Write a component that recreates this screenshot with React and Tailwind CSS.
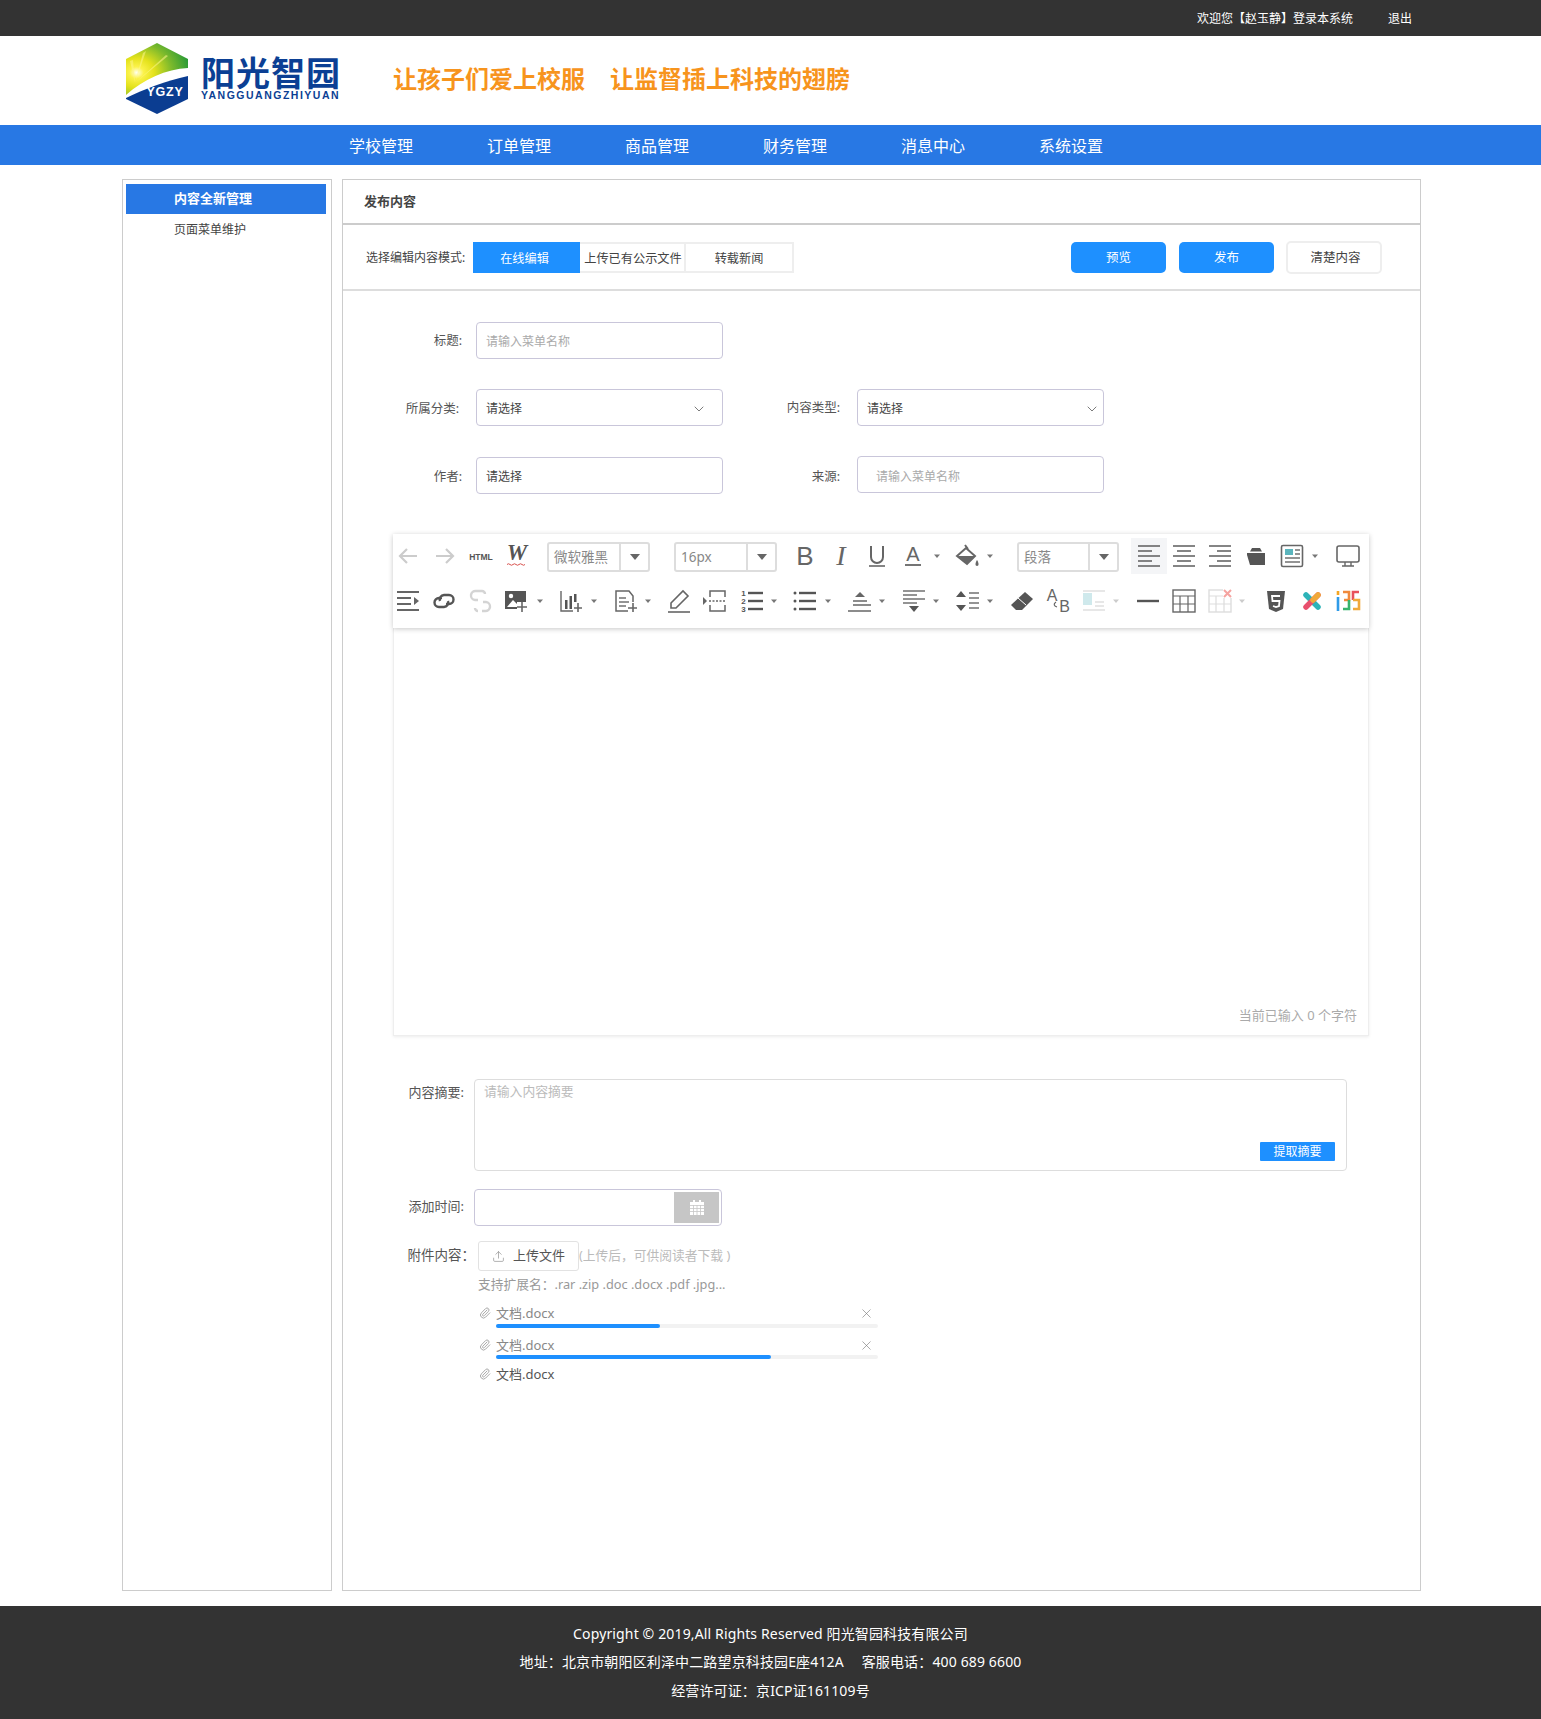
import { ChevronDown, Upload, Paperclip, X } from 'lucide-react';

const Svg = ({ children }) => (
  <svg width="24" height="24" viewBox="0 0 24 24" fill="none" className="block shrink-0 overflow-visible">
    {children}
  </svg>
);

const lines = (rows, color = '#666', w = 1.6) =>
  rows.map(([x1, x2, y], i) => <line key={i} x1={x1} x2={x2} y1={y} y2={y} stroke={color} strokeWidth={w} />);

const icons = {
  back: <Svg><path d="M21 12H4M11 5l-7 7 7 7" stroke="#ccc" strokeWidth="2.2" /></Svg>,
  forward: <Svg><path d="M3 12h17M13 5l7 7-7 7" stroke="#ccc" strokeWidth="2.2" /></Svg>,
  html: <Svg><text x="12" y="15.5" textAnchor="middle" fontSize="8.5" fontWeight="700" fill="#555" fontFamily="Liberation Sans">HTML</text></Svg>,
  word: (
    <Svg>
      <text x="12" y="16" textAnchor="middle" fontSize="23" fontWeight="700" fontStyle="italic" fill="#555" fontFamily="Liberation Serif">W</text>
      <path d="M2 20.500q1.500-1.500 3 0t3 0 3 0 3 0 3 0 3 0" stroke="#d9534f" strokeWidth="1" />
    </Svg>
  ),
  bold: <Svg><text x="12" y="21" textAnchor="middle" fontSize="26" fill="#666" fontFamily="Liberation Sans">B</text></Svg>,
  italic: <Svg><text x="12" y="21" textAnchor="middle" fontSize="28" fontStyle="italic" fill="#666" fontFamily="Liberation Serif">I</text></Svg>,
  underline: <Svg><path d="M6 2v11a6 6 0 0 0 12 0V2" stroke="#666" strokeWidth="2" /><path d="M4 22h16" stroke="#666" strokeWidth="1.6" /></Svg>,
  color: <Svg><text x="12" y="17" textAnchor="middle" fontSize="20" fill="#666" fontFamily="Liberation Sans">A</text><path d="M4 21h16" stroke="#666" strokeWidth="1.8" /></Svg>,
  bucket: (
    <Svg>
      <path d="M9 1l3 4M1 12l9-8 9 8-8 8z" stroke="#666" strokeWidth="2" />
      <path d="M2 12h17l-8 8z" fill="#666" />
      <path d="M21 16c2 3 2 6 0 6s-2-3 0-6z" fill="#666" />
    </Svg>
  ),
  alignLeft: <Svg>{lines([[1, 23, 2], [1, 15, 7], [1, 23, 12], [1, 15, 17], [1, 23, 22]])}</Svg>,
  alignCenter: <Svg>{lines([[1, 23, 2], [5, 19, 7], [1, 23, 12], [5, 19, 17], [1, 23, 22]])}</Svg>,
  alignRight: <Svg>{lines([[1, 23, 2], [9, 23, 7], [1, 23, 12], [9, 23, 17], [1, 23, 22]])}</Svg>,
  clip: <Svg><path d="M3 9h18v12H3z" fill="#555" /><path d="M8 4h8l2 3.500H6z" fill="#555" /><path d="M3 11l3 10H3z" fill="#fff" /></Svg>,
  news: (
    <Svg>
      <rect x="1.5" y="1.5" width="21" height="21" rx="1.5" stroke="#666" strokeWidth="1.6" />
      <rect x="5" y="5" width="8" height="6" fill="#5bb5bd" />
      {lines([[15, 20, 6], [15, 20, 10], [5, 20, 14], [5, 20, 18]], '#666', 1.4)}
    </Svg>
  ),
  monitor: (
    <Svg>
      <rect x="1" y="2" width="22" height="16" rx="2" stroke="#666" strokeWidth="1.6" />
      <path d="M9 18v4M15 18v4M6 22h12" stroke="#666" strokeWidth="1.4" />
    </Svg>
  ),
  indent: <Svg>{lines([[1, 23, 3], [1, 15, 9], [1, 15, 15], [1, 23, 21]], '#666', 2)}<path d="M18 8l5 4-5 4z" fill="#666" /></Svg>,
  link: <Svg><path d="M10 9H7a4.500 4.500 0 0 0 0 9h5a4.500 4.500 0 0 0 4-6M14 15h3a4.500 4.500 0 0 0 0-9h-5a4.500 4.500 0 0 0-4 6" stroke="#555" strokeWidth="2.4" /></Svg>,
  unlink: <Svg><path d="M14 2H8a4.500 4.500 0 0 0-1 9h3M14 22h3a4.500 4.500 0 0 0 1-9h-3M14 2a3 3 0 0 1 3 3M10 22a3 3 0 0 1-3-3" stroke="#d4d4d4" strokeWidth="2.4" /></Svg>,
  image: (
    <Svg>
      <rect x="1" y="2" width="21" height="18" fill="#555" />
      <circle cx="7" cy="7" r="2.200" fill="#fff" />
      <path d="M3 18l6-7 4 4 3-2v5z" fill="#fff" />
      <path d="M13 13h10v10H13z" fill="#fff" />
      <path d="M18 13v10M13 18h10" stroke="#666" strokeWidth="1.6" />
    </Svg>
  ),
  chart: (
    <Svg>
      <path d="M2 2v20h12" stroke="#666" strokeWidth="1.4" />
      <path d="M6 11h2.500v9H6zM10.500 7H13v13h-2.500zM15 5h2.500v8H15z" fill="#555" />
      <path d="M19 14v9M15 19h8" stroke="#666" strokeWidth="1.6" />
    </Svg>
  ),
  file: (
    <Svg>
      <path d="M14 22H2V2h13l4 5v6" stroke="#666" strokeWidth="1.5" />
      {lines([[5, 12, 9], [5, 15, 13], [5, 12, 17]], '#666', 1.4)}
      <path d="M19 14v9M14 19h9" stroke="#666" strokeWidth="1.6" />
    </Svg>
  ),
  pen: <Svg><path d="M4 14L16 2l5 5L9 19H4z" stroke="#666" strokeWidth="1.6" /><path d="M1 23h22" stroke="#666" strokeWidth="1.6" /></Svg>,
  pagebreak: (
    <Svg>
      <path d="M7 8V2h15v6M7 16v6h15v-6" stroke="#666" strokeWidth="1.5" />
      <path d="M6 12h17" stroke="#666" strokeWidth="1.4" strokeDasharray="2 1.500" />
      <path d="M0 8l4 4-4 4z" fill="#666" />
    </Svg>
  ),
  ol: (
    <Svg>
      {lines([[8, 23, 4], [8, 23, 12], [8, 23, 20]], '#555', 2.4)}
      <text x="3.500" y="7" textAnchor="middle" fontSize="8" fontWeight="700" fill="#555" fontFamily="Liberation Sans">1</text>
      <text x="3.500" y="15" textAnchor="middle" fontSize="8" fontWeight="700" fill="#555" fontFamily="Liberation Sans">2</text>
      <text x="3.500" y="23" textAnchor="middle" fontSize="8" fontWeight="700" fill="#555" fontFamily="Liberation Sans">3</text>
    </Svg>
  ),
  ul: (
    <Svg>
      {lines([[6, 23, 4], [6, 23, 12], [6, 23, 20]], '#555', 2.4)}
      <circle cx="2" cy="4" r="1.500" fill="#555" />
      <circle cx="2" cy="12" r="1.500" fill="#555" />
      <circle cx="2" cy="20" r="1.500" fill="#555" />
    </Svg>
  ),
  align: <Svg><path d="M12 3l5 5H7z" fill="#666" />{lines([[5, 19, 12], [5, 23, 16], [0, 23, 22]], '#666', 1.5)}</Svg>,
  valign: <Svg>{lines([[1, 23, 2], [1, 15, 6], [1, 23, 10], [1, 15, 14]], '#666', 1.4)}<path d="M7 17h10l-5 6z" fill="#555" /></Svg>,
  lineHeight: (
    <Svg>
      <path d="M5 2l5 6H0zM5 22l5-6H0z" fill="#555" />
      {lines([[13, 23, 4], [13, 23, 9], [13, 23, 14], [13, 23, 19]], '#666', 1.4)}
    </Svg>
  ),
  eraser: <Svg><path d="M15 3l8 7-11 11H6l-5-5z" fill="#555" /><path d="M8 9l8 7" stroke="#fff" strokeWidth="1" /></Svg>,
  ab: (
    <Svg>
      <text x="6" y="12" textAnchor="middle" fontSize="16" fill="#666" fontFamily="Liberation Sans">A</text>
      <text x="18.500" y="23" textAnchor="middle" fontSize="16" fill="#666" fontFamily="Liberation Sans">B</text>
      <path d="M10 13c-3 2-2 4 1 5" stroke="#666" strokeWidth="1.2" />
    </Svg>
  ),
  imageTable: <Svg><rect x="1" y="4" width="9" height="12" fill="#cfe9ec" />{lines([[1, 23, 2], [13, 22, 13], [13, 22, 17], [1, 23, 21]], '#ddd', 1.4)}</Svg>,
  hr: <Svg><path d="M1 12h22" stroke="#555" strokeWidth="2.4" /></Svg>,
  table: (
    <Svg>
      <rect x="1" y="1" width="22" height="22" stroke="#666" strokeWidth="1.4" />
      <path d="M1 7h22M1 15h22M8 7v16M16 7v16" stroke="#666" strokeWidth="1.2" />
    </Svg>
  ),
  tableDel: (
    <Svg>
      <rect x="1" y="1" width="22" height="22" stroke="#ddd" strokeWidth="1.4" />
      <path d="M1 7h22M1 15h22M8 7v16M16 7v16" stroke="#ddd" strokeWidth="1.2" />
      <rect x="15" y="0" width="9" height="9" fill="#fff" />
      <path d="M16 1l7 7M23 1l-7 7" stroke="#f5a3a0" strokeWidth="2" />
    </Svg>
  ),
  html5: <Svg><path d="M3 2h18l-2 18-7 3-7-3z" fill="#555" /><path d="M16 7H8l.5 5h7l-.5 5-3 1-3-1" stroke="#fff" strokeWidth="1.8" /></Svg>,
  xmind: (
    <Svg>
      <path d="M6 6l12 12" stroke="#2db3b8" strokeWidth="5.500" strokeLinecap="round" />
      <path d="M18 6L6 18" stroke="#e8506e" strokeWidth="5.500" strokeLinecap="round" />
      <path d="M18 6l-5 5" stroke="#f0a93a" strokeWidth="5.500" strokeLinecap="round" />
    </Svg>
  ),
  nums: (
    <Svg>
      <path d="M2 2v4" stroke="#f5a623" strokeWidth="2.600" />
      <path d="M2 8v14" stroke="#2f9be8" strokeWidth="2.600" />
      <path d="M7 3h6v8H8" stroke="#f08a3c" strokeWidth="2.600" />
      <path d="M13 11v9H7" stroke="#37b36b" strokeWidth="2.600" />
      <path d="M23 3h-6v8" stroke="#e8505b" strokeWidth="2.600" />
      <path d="M17 11h6v9h-6" stroke="#f0a93a" strokeWidth="2.600" />
    </Svg>
  ),
};

const Caret = ({ light }) => (
  <svg width="8" height="24" viewBox="0 0 8 24" className="block shrink-0">
    <path d="M1 10.500h6l-3 3.500z" fill={light ? '#ccc' : '#777'} />
  </svg>
);

const ToolSelect = ({ label, className }) => (
  <div className={`flex h-[30px] shrink-0 rounded-[3px] border-2 border-[#ddd] text-[13.500px] leading-[26px] text-[#888] ${className}`}>
    <span className="flex-1 pl-[5px]">{label}</span>
    <span className="flex w-[29px] items-center justify-center border-l-2 border-[#ddd]">
      <span className="h-0 w-0 border-x-[5px] border-t-[6px] border-x-transparent border-t-[#666]" />
    </span>
  </div>
);

const row1 = [
  ['back', 'ml-[3px]'], ['forward', 'ml-[13px]'], ['html', 'ml-[12px]'], ['word', 'ml-[12px]'],
];
const row1b = [
  ['bold', 'ml-[16px]'], ['italic', 'ml-[12px]'], ['underline', 'ml-[12px]'], ['color', 'ml-[12px]'],
  ['caret', 'ml-[8px]'], ['bucket', 'ml-[15px]'], ['caret', 'ml-[6px]'],
];
const row1c = [
  ['alignCenter', 'ml-[5px]'], ['alignRight', 'ml-[12px]'], ['clip', 'ml-[12px]'], ['news', 'ml-[12px]'],
  ['caret', 'ml-[7px]'], ['monitor', 'ml-[17px]'],
];
const row2 = [
  ['indent', 'ml-[3px]'], ['link', 'ml-[12px]'], ['unlink', 'ml-[12px]'], ['image', 'ml-[12px]'], ['caret', 'ml-[8px]'],
  ['chart', 'ml-[15px]'], ['caret', 'ml-[7px]'], ['file', 'ml-[16px]'], ['caret', 'ml-[6px]'], ['pen', 'ml-[15px]'],
  ['pagebreak', 'ml-[12px]'], ['ol', 'ml-[13px]'], ['caret', 'ml-[6px]'], ['ul', 'ml-[15px]'], ['caret', 'ml-[7px]'],
  ['align', 'ml-[16px]'], ['caret', 'ml-[6px]'], ['valign', 'ml-[16px]'], ['caret', 'ml-[6px]'], ['lineHeight', 'ml-[16px]'],
  ['caret', 'ml-[6px]'], ['eraser', 'ml-[16px]'], ['ab', 'ml-[12px]'], ['imageTable', 'ml-[12px]'], ['caretLight', 'ml-[6px]'],
  ['hr', 'ml-[16px]'], ['table', 'ml-[12px]'], ['tableDel', 'ml-[12px]'], ['caretLight', 'ml-[6px]'], ['html5', 'ml-[18px]'],
  ['xmind', 'ml-[12px]'], ['nums', 'ml-[12px]'],
];

const Tools = ({ items }) =>
  items.map(([name, ml], i) => (
    <span key={i} className={`block shrink-0 ${ml}`}>
      {name === 'caret' ? <Caret /> : name === 'caretLight' ? <Caret light /> : icons[name]}
    </span>
  ));

const Logo = () => (
  <svg width="66" height="74" viewBox="0 0 66 74" className="block shrink-0">
    <defs>
      <radialGradient id="sun" cx="0.17" cy="0.57" r="0.95">
        <stop offset="0" stopColor="#fffff0" />
        <stop offset="0.12" stopColor="#fbf24a" />
        <stop offset="0.3" stopColor="#e4e21c" />
        <stop offset="0.6" stopColor="#7dba2c" />
        <stop offset="1" stopColor="#0f9038" />
      </radialGradient>
    </defs>
    <path d="M33 2l31 16v9C42 28 20 38 2 54V18z" fill="url(#sun)" />
    <path d="M11 42L6 20l3-1zM11 42L19 12l3-2zM11 42L42 14l2 1z" fill="#fdf68a" opacity="0.55" />
    <path d="M64 35v23L33 73 2 58v-1C20 48 42 40 64 35z" fill="#0b3d91" />
    <text x="41" y="55" textAnchor="middle" fontSize="12.500" fontWeight="700" letterSpacing="0.8" fill="#fff" fontFamily="Liberation Sans">YGZY</text>
  </svg>
);

const CalendarIcon = () => (
  <svg width="14" height="15" viewBox="0 0 14 15" className="block">
    <path d="M0 2h14v13H0z" fill="#fff" />
    <path d="M3 0h2v3H3zM9 0h2v3H9z" fill="#fff" />
    <path d="M0 5.500h14M0 8.500h14M0 11.500h14M3.500 5v10M7 5v10M10.500 5v10" stroke="#c6c6c6" strokeWidth="0.8" />
  </svg>
);

const inputBox = 'flex h-[37px] shrink-0 items-center rounded-[4px] border border-[#c9c6da] bg-white text-[12px]';
const Label = ({ className, children }) => (
  <span className={`shrink-0 text-right text-[12.500px] whitespace-nowrap text-[#555] ${className}`}>{children}</span>
);

const FileRow = ({ done, pct, className, barClass }) => (
  <div className={`flex w-[400px] ${className}`}>
    <Paperclip size={12} className="mt-[2px] ml-[1px] w-[17px] shrink-0 pr-[5px] text-[#aaa]" />
    <div className="flex-1">
      <div className="flex items-center justify-between leading-[17px]">
        <span className={`text-[13px] ${done ? 'text-[#555]' : 'text-[#888]'}`}>文档.docx</span>
        {!done && <X size={15} strokeWidth={1} className="mr-[4px] text-[#777]" />}
      </div>
      {!done && (
        <div className={`h-[4px] w-[382px] rounded-full bg-[#f2f2f2] ${barClass}`}>
          <div className="h-full rounded-full bg-[#1e90ff]" style={{ width: `${pct}%` }} />
        </div>
      )}
    </div>
  </div>
);

const App = () => {
  return (
    <div className="min-h-[1719px] w-[1541px] bg-white font-['Noto_Sans','Noto_Sans_CJK_SC',sans-serif] text-[12px] text-[#333]">
      {/* top bar */}
      <div className="flex h-9 items-center justify-end bg-[#333] pt-[2px] pr-[129px] text-[12px] text-white">
        <span>欢迎您【赵玉静】登录本系统</span>
        <span className="ml-[35px]">退出</span>
      </div>

      {/* logo */}
      <div className="flex h-[89px] items-center pl-[124px]">
        <div className="mb-[5px]">
          <Logo />
        </div>
        <div className="mb-[3px] ml-[11px] w-[141px]">
          <div className="text-[34px] leading-[32px] font-bold tracking-[1px] whitespace-nowrap text-[#0b3f94]">阳光智园</div>
          <div className="mt-[1px] font-['Liberation_Sans',sans-serif] text-[10.500px] leading-[11px] font-bold tracking-[1.500px] whitespace-nowrap text-[#0b3f94]">YANGGUANGZHIYUAN</div>
        </div>
        <div className="mb-[4px] ml-[51px] text-[24px] font-bold whitespace-nowrap text-[#f7941d]">让孩子们爱上校服</div>
        <div className="mb-[4px] ml-[25px] text-[24px] font-bold whitespace-nowrap text-[#f7941d]">让监督插上科技的翅膀</div>
      </div>

      {/* nav */}
      <div className="flex h-10 items-center gap-[74px] bg-[#2878e4] pt-[2px] pl-[349px] text-[16px] text-white">
        {['学校管理', '订单管理', '商品管理', '财务管理', '消息中心', '系统设置'].map((item) => (
          <span key={item}>{item}</span>
        ))}
      </div>

      {/* body */}
      <div className="mt-[14px] flex h-[1412px] pl-[122px]">
        <div className="w-[210px] shrink-0 border border-[#ccc] pt-[4px] pr-[5px] pl-[3px]">
          <div className="h-[30px] bg-[#2878e4] pl-[48px] text-[13px] leading-[29px] font-bold text-white">内容全新管理</div>
          <div className="pl-[48px] text-[12px] leading-[31px] text-[#444]">页面菜单维护</div>
        </div>

        <div className="ml-[10px] w-[1079px] shrink-0 border border-[#ccc]">
          <div className="h-[45px] border-b-2 border-[#ccc] pl-[21px] text-[13px] leading-[43px] font-bold text-[#444]">发布内容</div>

          {/* mode + actions */}
          <div className="flex h-[66px] items-center border-b-2 border-[#ddd] pl-[23px]">
            <span className="w-[107px] shrink-0 pt-[1px] text-[12px] whitespace-nowrap text-[#444]">选择编辑内容模式:</span>
            <div className="flex h-[31px] shrink-0 text-[12.200px]">
              <span className="flex w-[107px] items-center justify-center bg-[#1e90ff] pt-[4px] pr-[4px] text-white">在线编辑</span>
              <span className="flex w-[106px] items-center justify-center border-y-2 border-r-2 border-[#eee] pt-[5px] pl-[2px] whitespace-nowrap text-[#444]">上传已有公示文件</span>
              <span className="flex w-[108px] items-center justify-center border-y-2 border-r-2 border-[#eee] pt-[4px] text-[#444]">转载新闻</span>
            </div>
            <div className="ml-[277px] flex h-[33px] items-center text-[12.500px]">
              <span className="flex h-[31px] w-[95px] items-center justify-center rounded-[5px] bg-[#1e90ff] pt-[3px] text-white">预览</span>
              <span className="ml-[13px] flex h-[31px] w-[95px] items-center justify-center rounded-[5px] bg-[#1e90ff] pt-[3px] text-white">发布</span>
              <span className="ml-[12px] flex h-[33px] w-[96px] items-center justify-center rounded-[5px] border-2 border-[#eee] pt-[3px] pl-[3px] text-[#444]">清楚内容</span>
            </div>
          </div>

          <div className="pt-[31px]">
            <div className="flex items-center">
              <Label className="w-[119px] pt-[2px]">标题:</Label>
              <div className={`ml-[14px] w-[247px] pt-[2px] pl-[9px] text-[#aaa] ${inputBox}`}>请输入菜单名称</div>
            </div>
            <div className="mt-[30px] flex items-center">
              <Label className="w-[116px] pt-[4px]">所属分类:</Label>
              <div className={`ml-[17px] w-[247px] justify-between pt-[2px] pr-[15px] pl-[9px] text-[#444] ${inputBox}`}>
                请选择
                <ChevronDown size={16} strokeWidth={1.300} className="text-[#666]" />
              </div>
              <Label className="ml-[55px] w-[62px] pt-[2px]">内容类型:</Label>
              <div className={`ml-[17px] w-[247px] justify-between pt-[2px] pr-[3px] pl-[9px] text-[#444] ${inputBox}`}>
                请选择
                <ChevronDown size={16} strokeWidth={1.300} className="text-[#666]" />
              </div>
            </div>
            <div className="mt-[31px] flex items-center">
              <Label className="w-[119px] pt-[4px]">作者:</Label>
              <div className={`ml-[14px] w-[247px] pt-[2px] pl-[9px] text-[#444] ${inputBox}`}>请选择</div>
              <Label className="ml-[83px] w-[34px] pt-[3px]">来源:</Label>
              <div className={`ml-[17px] w-[247px] -translate-y-px pt-[4px] pl-[18px] text-[#aaa] ${inputBox}`}>请输入菜单名称</div>
            </div>

            {/* editor */}
            <div className="mt-[40px] ml-[50px] w-[976px]">
              <div className="relative z-10 h-[94px] bg-white shadow-[0_1px_5px_rgba(0,0,0,0.22)]">
                <div className="flex h-[44px] items-center">
                  <Tools items={row1} />
                  <ToolSelect label="微软雅黑" className="ml-[18px] w-[103px] translate-y-px" />
                  <ToolSelect label="16px" className="ml-[24px] w-[103px] translate-y-px" />
                  <Tools items={row1b} />
                  <ToolSelect label="段落" className="ml-[23px] w-[102px] translate-y-px" />
                  <span className="ml-[12px] flex h-[36px] w-[36px] shrink-0 items-center justify-center bg-[#f4f5f7]">{icons.alignLeft}</span>
                  <Tools items={row1c} />
                </div>
                <div className="mt-[11px] flex h-[24px] items-center">
                  <Tools items={row2} />
                </div>
              </div>
              <div className="relative h-[408px] border-x border-b border-[#eee] shadow-[0_1px_3px_rgba(0,0,0,0.08)]">
                <span className="absolute right-[11px] bottom-[10px] text-[13px] text-[#aaa]">当前已输入 0 个字符</span>
              </div>
            </div>

            {/* summary */}
            <div className="mt-[43px] flex">
              <Label className="mt-[4px] w-[121px] text-[13px]">内容摘要:</Label>
              <div className="relative ml-[10px] h-[92px] w-[873px] rounded-[4px] border border-[#ddd] pt-[2px] pl-[9px] text-[12.800px] text-[#bbb]">
                请输入内容摘要
                <span className="absolute right-[11px] bottom-[9px] h-[19px] w-[75px] rounded-[1px] bg-[#1e90ff] text-center text-[12px] leading-[19px] text-white">提取摘要</span>
              </div>
            </div>

            {/* date */}
            <div className="mt-[18px] flex items-center">
              <Label className="w-[121px] pb-[2px] text-[13px]">添加时间:</Label>
              <div className="ml-[10px] flex h-[37px] w-[248px] justify-end rounded-[4px] border border-[#c9c6da] p-[2px]">
                <span className="flex w-[45px] items-center justify-center bg-[#c6c6c6]">
                  <CalendarIcon />
                </span>
              </div>
            </div>

            {/* attachments */}
            <div className="mt-[15px] flex">
              <Label className="mt-[4px] w-[132px] text-[13.500px]">附件内容：</Label>
              <div className="ml-[3px]">
                <div className="flex items-center">
                  <span className="flex h-[30px] w-[101px] items-center justify-center rounded-[3px] border border-[#e2e2e2] text-[13px] text-[#555]">
                    <Upload size={13} strokeWidth={1.200} className="mr-[8px] text-[#888]" />
                    上传文件
                  </span>
                  <span className="text-[12.750px] text-[#bbb]">(上传后，可供阅读者下载 )</span>
                </div>
                <div className="mt-[3px] text-[12.750px] leading-[20px] text-[#999]">支持扩展名：.rar .zip .doc .docx .pdf .jpg...</div>
                <FileRow pct={43} className="mt-[11px]" barClass="mt-[2px]" />
                <FileRow pct={72} className="mt-[9px]" barClass="mt-[1px]" />
                <FileRow done className="mt-[7px]" />
              </div>
            </div>
          </div>
        </div>
      </div>

      {/* footer */}
      <div className="mt-[15px] flex h-[113px] flex-col items-center justify-center bg-[#333] text-[14px] leading-[28.500px] tracking-[0.14px] text-white">
        <span>Copyright © 2019,All Rights Reserved 阳光智园科技有限公司</span>
        <span>地址：北京市朝阳区利泽中二路望京科技园E座412A　 客服电话：400 689 6600</span>
        <span>经营许可证：京ICP证161109号</span>
      </div>
    </div>
  );
};

export default App;
